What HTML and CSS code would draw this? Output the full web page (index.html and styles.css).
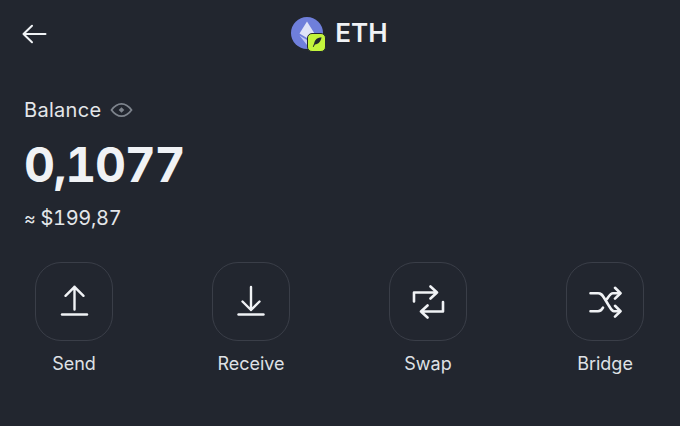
FILE: index.html
```html
<!DOCTYPE html>
<html lang="en">
<head>
<meta charset="utf-8">
<title>ETH</title>
<link rel="stylesheet" href="styles.css">
</head>
<body>
<main class="screen">
  <header class="top">
    <svg class="back" width="26" height="20" viewBox="0 0 26 20" fill="none" stroke="#f0f2f5" stroke-width="2" stroke-linecap="round" stroke-linejoin="round"><path d="M1.500 10H23.500M10 1.800 1.500 10l8.500 8.200"/></svg>
    <div class="title">
      <span class="coin">
        <svg width="33" height="33" viewBox="0 0 33 33"><circle cx="16" cy="16" r="16" fill="#6f7fdb"/><path d="M16 4.500 8.500 16.500 16 21l7.500-4.500z" fill="#dfe3f8"/><path d="M8.500 18.500 16 23l7.500-4.500L16 28z" fill="#c3caf2"/></svg>
        <span class="badge">
          <svg width="12" height="12" viewBox="0 0 12 12"><path d="M10.500 1.200C7 1.300 3.800 3.400 3.200 7.300L1.800 10.800l.8.300 1.300-2.700C7.500 8.300 10 5 10.500 1.200z" fill="#23272f"/></svg>
        </span>
      </span>
      <span class="ticker">ETH</span>
    </div>
  </header>
  <section class="balance">
    <div class="label">
      <span>Balance</span>
      <svg width="23" height="16" viewBox="0 0 23 16" fill="none" stroke="#7e848d" stroke-width="1.800"><path d="M1.500 8C4.500 3.800 7.800 1.800 11.500 1.800S18.500 3.800 21.500 8c-3 4.200-6.300 6.200-10 6.200S4.500 12.200 1.500 8z"/><path d="m11.500 5.200 2.800 2.800-2.800 2.800L8.700 8z" fill="#7e848d" stroke="none"/></svg>
    </div>
    <div class="amount">0,1077</div>
    <div class="fiat"><span class="approx">≈</span> $199,87</div>
  </section>
  <nav class="actions">
    <div class="action">
      <div class="tile">
        <svg width="34" height="34" viewBox="0 0 34 34" fill="none" stroke="#f0f2f5" stroke-width="2.400" stroke-linecap="round" stroke-linejoin="round"><path d="M17.500 24.500V1.800M8.500 10.800l9-9 9 9"/><path d="M5 29.500h25"/></svg>
      </div>
      <span class="name">Send</span>
    </div>
    <div class="action">
      <div class="tile">
        <svg width="34" height="34" viewBox="0 0 34 34" fill="none" stroke="#f0f2f5" stroke-width="2.400" stroke-linecap="round" stroke-linejoin="round"><path d="M17 2v23M8.500 16.500 17 25l8.500-8.500"/><path d="M4.500 29.500h25"/></svg>
      </div>
      <span class="name">Receive</span>
    </div>
    <div class="action">
      <div class="tile">
        <svg width="34" height="34" viewBox="0 0 34 34" fill="none" stroke="#f0f2f5" stroke-width="2.600" stroke-linecap="round" stroke-linejoin="round"><path d="M3 16.500V7.500h23M19.500 1.500l6.500 6-6.500 6"/><path d="M32 17v9.500H10M16.500 20.500l-6.500 6 6.500 6"/></svg>
      </div>
      <span class="name">Swap</span>
    </div>
    <div class="action">
      <div class="tile">
        <svg width="34" height="34" viewBox="0 0 34 34" fill="none" stroke="#f0f2f5" stroke-width="2.600" stroke-linecap="round" stroke-linejoin="round"><path d="M2.500 8.200h7.500c3 0 4 1.500 6 4.500l4 6.500c2 3 3.500 7 6 7h6"/><path d="M2.500 26.200h7.500c2.500 0 4-1.500 5-3.500M19 14c2-3 3.500-5.800 6-5.800h7"/><path d="M27 2.800l5.500 5.400L27 13.600M27 20.800l5.500 5.400L27 31.600"/></svg>
      </div>
      <span class="name">Bridge</span>
    </div>
  </nav>
</main>
</body>
</html>
```

FILE: styles.css
```css
html, body {
  margin: 0;
  height: 100%;
  background: #22262f;
}

.screen {
  width: 680px;
  height: 426px;
  box-sizing: border-box;
  padding: 16px 36px 0 24px;
  overflow: hidden;
  font-family: "Inter", "Liberation Sans", sans-serif;
  font-variant-numeric: tabular-nums;
  color: #f0f2f5;
  display: flex;
  flex-direction: column;
}

.top {
  height: 34px;
  position: relative;
  display: flex;
  align-items: center;
  justify-content: center;
  padding-right: 8px;
}

.back {
  position: absolute;
  left: -2px;
  top: 8px;
}

.title {
  display: flex;
  align-items: center;
  gap: 11px;
  margin-left: 19px;
}

.coin {
  position: relative;
  width: 33px;
  height: 33px;
  display: block;
}

.badge {
  position: absolute;
  right: -2px;
  bottom: -2px;
  width: 17px;
  height: 17px;
  border-radius: 5px;
  background: #c3f53c;
  border: 1px solid #22262f;
  display: flex;
  align-items: center;
  justify-content: center;
}

.ticker {
  font-size: 26px;
  font-weight: 600;
  line-height: 34px;
}

.balance {
  margin-top: 47px;
}

.label {
  display: flex;
  align-items: center;
  gap: 9px;
  font-size: 20px;
  letter-spacing: 0.3px;
  line-height: 26px;
  color: #e4e6ea;
}

.amount {
  margin-top: 14px;
  font-size: 48px;
  font-weight: 700;
  letter-spacing: -1.300px;
  line-height: 56px;
}

.fiat {
  margin-top: 12px;
  font-size: 20px;
  letter-spacing: -0.300px;
  line-height: 26px;
  color: #e4e6ea;
}

.approx {
  font-size: 18px;
}

.actions {
  margin-top: 30px;
  margin-left: 11px;
  display: flex;
  justify-content: space-between;
}

.action {
  width: 78px;
  display: flex;
  flex-direction: column;
  align-items: center;
  gap: 11px;
}

.tile {
  width: 78px;
  height: 79px;
  flex: none;
  box-sizing: border-box;
  border: 1.500px solid #3a3e48;
  border-radius: 26px;
  display: flex;
  align-items: center;
  justify-content: center;
}

.name {
  font-size: 18px;
  line-height: 24px;
  color: #dfe1e5;
  white-space: nowrap;
}
```
